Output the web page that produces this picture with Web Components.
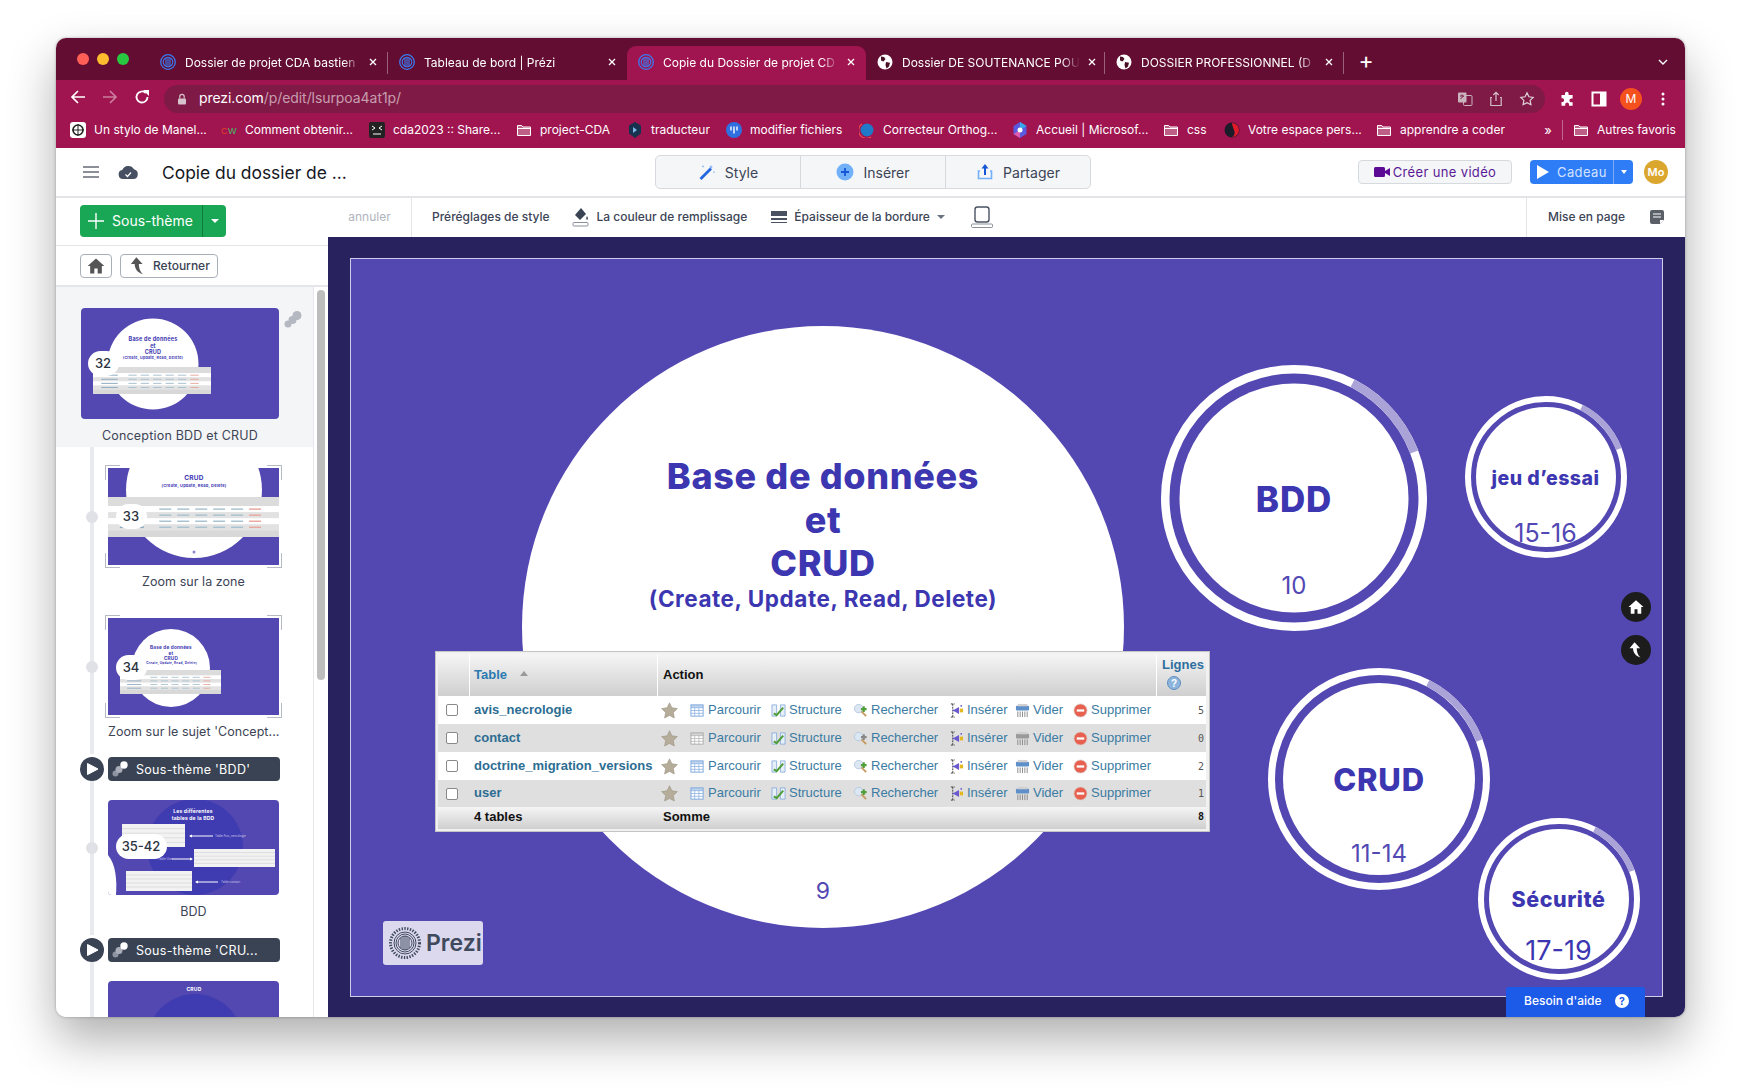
<!DOCTYPE html>
<html lang="fr">
<head>
<meta charset="utf-8">
<title>Prezi</title>
<style>
  html, body { margin: 0; background: #fff; font-family: Inter, "Liberation Sans", sans-serif; }
  body { width: 1741px; height: 1092px; overflow: hidden; }
</style>
</head>
<body>
<browser-window>
  <browser-chrome></browser-chrome>
  <prezi-topbar></prezi-topbar>
  <prezi-editor>
    <prezi-sidebar slot="side"></prezi-sidebar>
    <prezi-toolbar slot="tools"></prezi-toolbar>
    <slide-canvas slot="canvas"></slide-canvas>
  </prezi-editor>
</browser-window>

<script>
// small svg icons shared between the elements
const icons = {
    home: '<path d="M12 3 2 12h3v9h5v-6h4v6h5v-9h3z"/>',
    back: '<path d="M10 1.500 3.500 9.500H8c.2 5.500 3 10 10 12.500-3.500-3-5-7.500-5-12.500h4.500z"/>',
    prezi: '<circle cx="8" cy="8" r="7.300" fill="none" stroke="#3a7bf0" stroke-width="1.300"/><circle cx="8" cy="8" r="4.800" fill="none" stroke="#3a7bf0" stroke-width="1.100"/><path d="M6 4v8M8 3.500v9M10 4v8" stroke="#3a7bf0" stroke-width="1.100"/>',
    globe: '<circle cx="8" cy="8" r="7.500" fill="#fff"/><path d="M4 2.500 7 3 8.500 5 6.500 7.500 4 6.500zM9 8l4 .8-1 3.700-2.500 2L8.500 11z" fill="#4a1027"/>',
    folder: '<path d="M1.500 3.500h4.200l1.300 1.500h7.500v8.500h-13z" fill="rgba(255,255,255,.32)" stroke="#fff" stroke-width="1"/><path d="M1.500 6.500h13" stroke="#fff"/>'
};

function svg(size, body, view = '0 0 16 16') {
    return `<svg width="${size}" height="${size}" viewBox="${view}" style="display:block;flex:none">${body}</svg>`;
}

class BrowserWindow extends HTMLElement {
    constructor() {
        super();
        this.attachShadow({mode: 'open'});
        this.shadowRoot.innerHTML = `
        <style>
          :host {
             display: flex;
             flex-direction: column;
             width: 1629px;
             height: 979px;
             margin: 38px 0 0 56px;
             border-radius: 10px;
             overflow: hidden;
             background: #fff;
             box-shadow: 0 22px 48px rgba(0,0,0,.32), 0 0 3px rgba(0,0,0,.3);
          }
        </style>
        <slot></slot>`;
    }
}

class BrowserTab extends HTMLElement {
    constructor() {
        super();
        this.attachShadow({mode: 'open'});
        const icon = this.getAttribute('icon') === 'globe' ? icons.globe : icons.prezi;
        this.shadowRoot.innerHTML = `
        <style>
          :host {
             display: flex;
             align-items: center;
             box-sizing: border-box;
             width: 239px;
             height: 34px;
             padding: 0 9px 2px 11px;
             font-size: 12px;
             color: #fff;
             position: relative;
          }
          :host([active]) {
             background: #a0144f;
             border-radius: 9px 9px 0 0;
          }
          :host([sep])::after {
             content: '';
             position: absolute;
             right: 0;
             top: 6px;
             height: 22px;
             width: 1px;
             background: rgba(255,255,255,.35);
          }
          .title {
             flex: 1;
             margin-left: 9px;
             white-space: nowrap;
             -webkit-mask-image: linear-gradient(to right, #000 90%, transparent 100%);
          }
          .close { flex: none; width: 12px; margin-left: 6px; }
        </style>
        ${svg(16, icon)}
        <span class="title">${this.getAttribute('label')}</span>
        <span class="close">${svg(12, '<path d="M3 3l6 6M9 3 3 9" stroke="#fff" stroke-width="1.300"/>', '0 0 12 12')}</span>`;
    }
}

class BookMark extends HTMLElement {
    constructor() {
        super();
        this.attachShadow({mode: 'open'});
        this.shadowRoot.innerHTML = `
        <style>
          :host {
             display: flex;
             align-items: center;
             gap: 8px;
             flex: none;
             width: var(--w);
             font-size: 12px;
             color: #fff;
             white-space: nowrap;
          }
        </style>
        <slot name="icon"></slot><slot></slot>`;
    }
}

class BrowserChrome extends HTMLElement {
    constructor() {
        super();
        this.attachShadow({mode: 'open'});
        this.render();
    }

    #mark(width, icon, label) {
        return `<book-mark style="--w:${width}px">${svg(16, icon).replace('<svg', '<svg slot="icon"')}${label}</book-mark>`;
    }

    render() {
        this.shadowRoot.innerHTML = `
        <style>
          :host { display: block; flex: none; }
          .tabs {
             display: flex;
             align-items: flex-end;
             height: 42px;
             background: #640d33;
          }
          .lights { display: flex; gap: 8px; width: 93px; box-sizing: border-box; padding: 0 0 15px 21px; }
          .lights i { width: 12px; height: 12px; border-radius: 50%; }
          .plus { color: #fff; font-size: 23px; font-weight: 400; width: 44px; text-align: center; height: 36px; line-height: 34px; }
          .chev { margin-left: auto; padding: 0 16px 12px 0; }
          .bar {
             display: flex;
             align-items: center;
             height: 33px;
             background: #a0144f;
             padding-top: 0;
          }
          .nav { display: flex; gap: 16px; width: 108px; box-sizing: border-box; padding-left: 14px; }
          .address {
             display: flex;
             align-items: center;
             width: 1381px;
             height: 28px;
             margin-top: 4px;
             border-radius: 14px;
             background: #7e1a45;
             box-sizing: border-box;
             padding: 0 10px 0 12px;
             font-size: 14px;
             color: rgba(255,255,255,.58);
          }
          .address .url { margin: 0 0 2px 11px; letter-spacing: -.07px; }
          .address b { font-weight: 400; color: #fff; }
          .address .end { margin-left: auto; display: flex; gap: 15px; align-items: center; }
          .bar-right { display: flex; gap: 16px; margin: 4px 0 0 14px; align-items: center; }
          .avatar {
             width: 22px; height: 22px; margin: 0 -3px; border-radius: 50%;
             background: #f4511e; color: #fff; font-size: 12px;
             display: flex; align-items: center; justify-content: center;
          }
          .marks {
             display: flex;
             align-items: center;
             height: 35px;
             background: #a0144f;
             padding: 0 0 2px 14px;
             box-sizing: border-box;
          }
          .more { color: #fff; font-size: 13px; width: 22px; text-align: center; margin-left: 6px; }
          .sep { width: 1px; height: 20px; background: rgba(255,255,255,.35); margin: 0 10px 0 3px; flex: none; }
        </style>
        <div class="tabs">
          <div class="lights"><i style="background:#ff5f57"></i><i style="background:#febc2e"></i><i style="background:#28c840"></i></div>
          <browser-tab sep label="Dossier de projet CDA bastien"></browser-tab>
          <browser-tab label="Tableau de bord | Prézi"></browser-tab>
          <browser-tab active label="Copie du Dossier de projet CD"></browser-tab>
          <browser-tab sep icon="globe" label="Dossier DE SOUTENANCE POU"></browser-tab>
          <browser-tab sep icon="globe" label="DOSSIER PROFESSIONNEL (D"></browser-tab>
          <span class="plus">+</span>
          <span class="chev">${svg(12, '<path d="M2 4l4 4 4-4" fill="none" stroke="#fff" stroke-width="1.400"/>', '0 0 12 12')}</span>
        </div>
        <div class="bar">
          <div class="nav">
            ${svg(16, '<path d="M15 8H2M8 2 2 8l6 6" fill="none" stroke="#fff" stroke-width="1.700"/>')}
            ${svg(16, '<path d="M1 8h13M8 2l6 6-6 6" fill="none" stroke="#fff" stroke-opacity=".45" stroke-width="1.700"/>')}
            ${svg(16, '<path d="M13.500 8A5.500 5.500 0 1 1 11.800 4" fill="none" stroke="#fff" stroke-width="1.800"/><path d="M9 1h6v6z" fill="#fff"/>')}
          </div>
          <div class="address">
            ${svg(12, '<rect x="2" y="5.500" width="8" height="6" rx="1" fill="#d6c3cc"/><path d="M3.800 5.500V3.500a2.200 2.200 0 0 1 4.400 0v2" fill="none" stroke="#d6c3cc" stroke-width="1.200"/>', '0 0 12 12')}
            <span class="url"><b>prezi.com</b>/p/edit/lsurpoa4at1p/</span>
            <span class="end">
              ${svg(16, '<rect x="1" y="1.500" width="8.500" height="10" rx="1" fill="#c9b4be"/><rect x="6.500" y="4.500" width="8.500" height="10" rx="1" fill="none" stroke="#c9b4be"/><path d="M3 5h4M5 3.500V5M3.500 8 6.500 5" stroke="#7e1a45"/>')}
              ${svg(16, '<path d="M4 6.500H2.800v8h10.400v-8H12" fill="none" stroke="#d3c0ca" stroke-width="1.200"/><path d="M8 10V1.500M5.300 4 8 1.300 10.700 4" fill="none" stroke="#d3c0ca" stroke-width="1.200"/>')}
              ${svg(16, '<path d="m8 1.800 1.900 4 4.300.6-3.100 3 .8 4.300L8 11.600l-3.900 2.100.8-4.300-3.100-3 4.300-.6z" fill="none" stroke="#e0d2d9" stroke-width="1.200"/>')}
            </span>
          </div>
          <div class="bar-right">
            ${svg(16, '<path d="M6 2.500a1.800 1.800 0 0 1 3.600 0V4h4v3.500h-1.300a1.900 1.900 0 0 0 0 3.800h1.300v3.500H10v-1.300a1.900 1.900 0 0 0-3.800 0v1.300H2.500v-3.800h1.200a1.900 1.900 0 0 0 0-3.700H2.500V4H6z" fill="#fff"/>')}
            ${svg(16, '<rect x="1.500" y="1.500" width="13" height="13" fill="none" stroke="#fff" stroke-width="2"/><rect x="9" y="1.500" width="5.500" height="13" fill="#fff"/>')}
            <span class="avatar">M</span>
            ${svg(16, '<circle cx="8" cy="3" r="1.500" fill="#fff"/><circle cx="8" cy="8" r="1.500" fill="#fff"/><circle cx="8" cy="13" r="1.500" fill="#fff"/>')}
          </div>
        </div>
        <div class="marks">
          ${this.#mark(151, '<rect x="0" y="0" width="16" height="16" rx="3" fill="#fff"/><circle cx="8" cy="8" r="5" fill="none" stroke="#222" stroke-width="1.600"/><path d="M8 2v12M2 8h12" stroke="#222"/>', 'Un stylo de Manel...')}
          ${this.#mark(148, '<text x="0" y="12" font-size="9" font-family="Liberation Sans" fill="#e8402a">C</text><text x="7" y="12" font-size="9" font-family="Liberation Sans" fill="#3fbf6a">W</text>', 'Comment obtenir...')}
          ${this.#mark(147, '<rect width="16" height="16" rx="2" fill="#222"/><path d="M3 4l3 2-3 2M13 4l-3 2 3 2M4 12h8" fill="none" stroke="#fff"/>', 'cda2023 :: Share...')}
          ${this.#mark(111, icons.folder, 'project-CDA')}
          ${this.#mark(99, '<path d="M8 0l6 3.500v8L8 16l-6-4.500v-8z" fill="#16324f"/><path d="M6 5l4 3-4 3z" fill="#7fb6e6"/>', 'traducteur')}
          ${this.#mark(133, '<circle cx="8" cy="8" r="8" fill="#2f6fe0"/><path d="M5 4.500v4M8 4.500v7M11 4.500v4" stroke="#fff" stroke-width="1.400"/>', 'modifier fichiers')}
          ${this.#mark(153, '<circle cx="8" cy="8" r="6.500" fill="#1f78c8"/><path d="M3 2a7.500 7.500 0 0 0 9 13" fill="none" stroke="#e84a4a" stroke-width="1.300"/>', 'Correcteur Orthog...')}
          ${this.#mark(151, '<path d="M8 0l6.500 4v8L8 16l-6.500-4V4z" fill="#5a5ae0"/><path d="M8 0l6.500 4L8 8z" fill="#38a8e8"/><path d="M1.500 12 8 8l0 8z" fill="#e05ab0"/><circle cx="8" cy="8" r="2.500" fill="#fff"/>', 'Accueil | Microsof...')}
          ${this.#mark(61, icons.folder, 'css')}
          ${this.#mark(152, '<circle cx="8" cy="8" r="7.500" fill="#1b1b2a"/><path d="M8 1a7 7 0 0 1 0 14c3-2 3-4 2-7S8 3 8 1z" fill="#e01a2a"/>', 'Votre espace pers...')}
          ${this.#mark(155, icons.folder, 'apprendre a coder')}
          <span class="more">»</span>
          <span class="sep"></span>
          ${this.#mark(95, icons.folder, 'Autres favoris')}
        </div>`;
    }
}

class PreziTopbar extends HTMLElement {
    constructor() {
        super();
        this.attachShadow({mode: 'open'});
        this.shadowRoot.innerHTML = `
        <style>
          :host {
             display: flex;
             align-items: center;
             flex: none;
             height: 50px;
             box-sizing: border-box;
             background: #fff;
             border-bottom: 2px solid #e2e4e8;
          }
          .left { display: flex; align-items: center; width: 599px; box-sizing: border-box; padding-left: 27px; }
          .title { font-size: 17.400px; font-weight: 400; color: #15181e; margin-left: 23px; white-space: nowrap; }
          .group {
             display: flex;
             width: 436px;
             height: 34px;
             box-sizing: border-box;
             border: 1px solid #d6d9de;
             border-radius: 5px;
             background: #f5f6f8;
          }
          .group div {
             flex: 1;
             display: flex;
             align-items: center;
             justify-content: center;
             gap: 9px;
             font-size: 14px;
             color: #3c4456;
          }
          .group div + div { border-left: 1px solid #d6d9de; }
          .right { margin-left: auto; display: flex; align-items: center; padding-right: 17px; }
          .video {
             display: flex;
             align-items: center;
             gap: 3px;
             width: 154px;
             height: 24px;
             box-sizing: border-box;
             justify-content: center;
             border: 1px solid #d6d9de;
             border-radius: 4px;
             background: #f5f6f8;
             color: #5a1a96;
             font-size: 13px;
             letter-spacing: .35px;
             margin-right: 18px;
          }
          .gift {
             display: flex;
             align-items: center;
             width: 103px;
             height: 24px;
             border-radius: 4px;
             background: #2e7cf6;
             color: #d4e3fd;
             font-size: 13px;
             letter-spacing: .4px;
             margin-right: 11px;
          }
          .gift .play { margin: 0 7px 0 6px; }
          .gift .drop { margin-left: auto; width: 19px; height: 24px; border-left: 1px solid #7aaaf8; display: flex; align-items: center; justify-content: center; }
          .mo {
             width: 24px; height: 24px; border-radius: 50%; background: #dba62e; color: #fff;
             font-size: 11px; font-weight: 600; display: flex; align-items: center; justify-content: center;
          }
        </style>
        <div class="left">
          ${svg(16, '<path d="M0 3h16M0 8h16M0 13h16" stroke="#666b75" stroke-width="1.500"/>')}
          <span style="width:18px"></span>
          ${svg(22, '<path d="M6 18a4.500 4.500 0 0 1-.8-8.900A6.500 6.500 0 0 1 17 8.300 5 5 0 0 1 17 18z" fill="#465062"/><path d="M8.500 13.500l2 2 3.500-4" fill="none" stroke="#fff" stroke-width="1.200"/>', '0 0 22 22')}
          <span class="title">Copie du dossier de ...</span>
        </div>
        <div class="group">
          <div>${svg(18, '<path d="M2.500 16 13 5.500" stroke="#2468e0" stroke-width="2.800"/><path d="M13 2l.6 1.400L15 4l-1.400.6L13 6l-.6-1.400L11 4l1.400-.6zM5 2l.4 1 1 .4-1 .4-.4 1-.4-1-1-.4 1-.4zM16 8l.3.8.8.3-.8.3-.3.8-.3-.8-.8-.3.8-.3z" fill="#6ea6f5"/>', '0 0 18 18')}<span>Style</span></div>
          <div>${svg(18, '<circle cx="9" cy="9" r="8.500" fill="#72b1f8"/><path d="M9 5v8M5 9h8" stroke="#1556d8" stroke-width="1.800"/>', '0 0 18 18')}<span>Insérer</span></div>
          <div>${svg(18, '<path d="M4 8H2.500v7.500h13V8H14" fill="none" stroke="#72b1f8" stroke-width="1.600"/><path d="M9 12V4" stroke="#1556d8" stroke-width="2"/><path d="M5.500 5.500 9 1l3.500 4.500z" fill="#1556d8"/>', '0 0 18 18')}<span>Partager</span></div>
        </div>
        <div class="right">
          <div class="video">${svg(16, '<rect x="0" y="3" width="11" height="10" rx="1.500" fill="#5a0a94"/><path d="M11 7l5-3v8l-5-3z" fill="#5a0a94"/>')}<span>Créer une vidéo</span></div>
          <div class="gift">
            <span class="play">${svg(14, '<path d="M1 0l12 7-12 7z" fill="#fff"/>', '0 0 14 14')}</span><span>Cadeau</span>
            <span class="drop">${svg(8, '<path d="M1 2h6L4 6z" fill="#fff"/>', '0 0 8 8')}</span>
          </div>
          <div class="mo">Mo</div>
        </div>`;
    }
}

class PreziEditor extends HTMLElement {
    constructor() {
        super();
        this.attachShadow({mode: 'open'});
        this.shadowRoot.innerHTML = `
        <style>
          :host {
             display: grid;
             flex: 1;
             min-height: 0;
             grid-template-columns: 272px 1fr;
             grid-template-rows: 39px 1fr;
          }
          ::slotted([slot=side]) { grid-row: 1 / 3; }
        </style>
        <slot name="side"></slot><slot name="tools"></slot><slot name="canvas"></slot>`;
    }
}

class PreziToolbar extends HTMLElement {
    constructor() {
        super();
        this.attachShadow({mode: 'open'});
        this.shadowRoot.innerHTML = `
        <style>
          :host {
             display: flex;
             align-items: center;
             background: #fff;
             font-size: 12px;
             font-weight: 500;
             color: #3c4456;
             white-space: nowrap;
          }
          .undo {
             width: 84px; height: 100%; box-sizing: border-box; flex: none;
             border-right: 1px solid #e2e4e8; color: #b0b4bd; font-weight: 400;
             display: flex; align-items: center; justify-content: center; padding-bottom: 2px;
          }
          .item { display: flex; align-items: center; padding-bottom: 2px; }
          .end {
             margin-left: auto; height: 100%; box-sizing: border-box;
             border-left: 1px solid #e2e4e8; padding: 0 21px 2px;
             display: flex; align-items: center; gap: 25px;
          }
        </style>
        <div class="undo">annuler</div>
        <div class="item" style="margin-left:20px">Préréglages de style</div>
        <div class="item" style="margin-left:21px;gap:6px">
          ${svg(20, '<path d="M10 1 4 8l5 5 6-6z" fill="#3a4354"/><path d="M16 9c1 2 1.500 3 0 4-1-1-1-2 0-4z" fill="#3a4354"/><rect x="2" y="15.500" width="15" height="3.500" rx="1" fill="none" stroke="#8a909b"/>', '0 0 20 20')}
          <span>La couleur de remplissage</span>
        </div>
        <div class="item" style="margin-left:24px;gap:7px">
          ${svg(16, '<rect y="2" width="16" height="5" fill="#4a5262"/><rect y="9" width="16" height="2" fill="#4a5262"/><rect y="13" width="16" height="1" fill="#4a5262"/>')}
          <span>Épaisseur de la bordure</span>
          ${svg(8, '<path d="M0 2h8L4 6z" fill="#6b7280"/>', '0 0 8 8')}
        </div>
        <div class="item" style="margin-left:25px">
          ${svg(24, '<rect x="5" y="2" width="14" height="15" rx="2.500" fill="none" stroke="#4a5262" stroke-width="1.400"/><rect x="1.500" y="19" width="21" height="3.500" rx="1" fill="none" stroke="#8a909b"/>', '0 0 24 24')}
        </div>
        <div class="end">
          <span>Mise en page</span>
          ${svg(14, '<path d="M2 0h10a2 2 0 0 1 2 2v8l-4 4H2a2 2 0 0 1-2-2V2a2 2 0 0 1 2-2z" fill="#5b6068"/><path d="M3 4h8M3 7h8" stroke="#fff" stroke-width="1.200"/><path d="M10 14v-4h4" fill="#fff"/>', '0 0 14 14')}
        </div>`;
    }
}

// mini phpMyAdmin table drawn in the slide thumbnails
function miniTable(x, y, w, h) {
    const rowH = h / 6.6;
    let out = `<rect x="${x}" y="${y}" width="${w}" height="${h}" fill="#efefef"/><rect x="${x}" y="${y}" width="${w}" height="${rowH * 1.5}" fill="#dcdcdc"/>`;
    for (let i = 0; i < 4; i++) {
        const ry = y + rowH * (1.5 + i);
        out += `<rect x="${x}" y="${ry}" width="${w}" height="${rowH}" fill="${i % 2 ? '#e2e2e2' : '#fff'}"/>`;
        out += `<rect x="${x + w * .07}" y="${ry + rowH * .38}" width="${w * .14}" height="${rowH * .24}" fill="#8fabc0"/>`;
        for (let j = 0; j < 6; j++) {
            out += `<rect x="${x + w * (.3 + j * .105)}" y="${ry + rowH * .38}" width="${w * .07}" height="${rowH * .24}" fill="${j === 5 ? '#e8a89f' : '#a9c2d0'}"/>`;
        }
    }
    out += `<rect x="${x}" y="${y + rowH * 5.5}" width="${w}" height="${rowH * 1.1}" fill="#d8d8d8"/>`;
    return out;
}

function miniText(x, y, size, label, fill = '#3c36b1') {
    return `<text x="${x}" y="${y}" text-anchor="middle" font-size="${size}" font-weight="700" font-family="Inter, sans-serif" letter-spacing=".2" fill="${fill}">${label}</text>`;
}

function miniDeck(cx, top, scale) {
    return miniText(cx, top, 5.500 * scale, 'Base de données')
        + miniText(cx, top + 6.500 * scale, 5.500 * scale, 'et')
        + miniText(cx, top + 13 * scale, 5.500 * scale, 'CRUD')
        + miniText(cx, top + 18 * scale, 3.700 * scale, '(Create, Update, Read, Delete)');
}

function miniSheet(x, y, w, h) {
    let out = `<rect x="${x}" y="${y}" width="${w}" height="${h}" fill="#f2f2f2"/>`;
    for (let i = 1; i < 5; i++) {
        out += `<path d="M${x} ${y + i * h / 5}h${w}" stroke="#c8c8c8" stroke-width=".5"/>`;
    }
    return out;
}

function miniNote(x, y, label) {
    return `<text x="${x}" y="${y}" font-size="3" font-family="Inter, sans-serif" fill="#c9c5ea">${label}</text>`;
}

const thumbs = {
    deck: () => `<circle cx="72" cy="56" r="45.500" fill="#fff"/>${miniDeck(72, 33, 1)}${miniTable(12, 59, 118, 27)}`,
    zoom: () => `<circle cx="86" cy="22" r="68" fill="#fff"/>${miniText(86, 12, 6.500, 'CRUD')}${miniText(86, 19, 4, '(Create, Update, Read, Delete)')}${miniTable(0, 29, 171, 40)}<circle cx="86" cy="84" r="1.500" fill="#8f88d0"/>`,
    topic: () => `<circle cx="63" cy="50" r="39" fill="#fff"/>${miniDeck(63, 31, .85)}${miniTable(12, 52, 101, 24)}`,
    tables: () => `<circle cx="87" cy="47" r="48" fill="#3f3bb0"/><path d="M0 55C8 65 9 80 8 95H0z" fill="#fff"/>${miniText(85, 13, 5, 'Les différentes', '#fff')}${miniText(85, 20, 5, 'tables de la BDD', '#fff')}${miniSheet(14, 24, 63, 23)}${miniSheet(86, 49, 81, 18)}${miniSheet(18, 71, 66, 20)}<path d="M82 36h23M64 59h20M88 82h22" stroke="#fff" stroke-width="1"/><path d="M81 36l3-1.500v3zM85 59l-3-1.500v3zM87 82l3-1.500v3z" fill="#fff"/>${miniNote(107, 37, 'Table Avis_necrologie')}${miniNote(50, 60, 'Table User')}${miniNote(113, 83, 'Table contact')}`,
    crud: () => `<circle cx="87" cy="61" r="48" fill="#3f3bb0"/>${miniText(86, 10, 5, 'CRUD', '#fff')}`
};

class SlideThumb extends HTMLElement {
    constructor() {
        super();
        this.attachShadow({mode: 'open'});
        const w = this.getAttribute('w');
        const h = this.getAttribute('h');
        const num = this.getAttribute('num');
        const pill = this.getAttribute('pill') || 31;
        this.shadowRoot.innerHTML = `
        <style>
          :host {
             display: block;
             position: relative;
             width: ${w}px;
             height: ${h}px;
             background: #5348b1;
             box-sizing: content-box;
             overflow: hidden;
             border-radius: ${this.hasAttribute('square') ? 0 : 4}px;
          }
          svg { display: block; }
          .badge {
             position: absolute;
             left: ${this.getAttribute('bx') - pill / 2}px;
             top: ${this.getAttribute('by') - 12.500}px;
             width: ${pill}px;
             height: 25px;
             border-radius: 13px;
             background: #fff;
             font-size: 13px;
             font-weight: 500;
             color: #2b3240;
             display: flex;
             align-items: center;
             justify-content: center;
          }
        </style>
        <svg width="${w}" height="${h}">${thumbs[this.getAttribute('kind')]()}</svg>
        ${num ? `<div class="badge">${num}</div>` : ''}`;
    }
}

class SideItem extends HTMLElement {
    constructor() {
        super();
        this.attachShadow({mode: 'open'});
        const label = this.getAttribute('label');
        this.shadowRoot.innerHTML = `
        <style>
          :host {
             display: block;
             position: relative;
             padding: var(--pt, 0) 0 var(--pb, 15px) 52px;
          }
          :host::before {
             content: '';
             position: absolute;
             left: 34px;
             top: 0;
             bottom: 0;
             width: 4px;
             background: #e9eaed;
          }
          :host([root]) { padding: 21px 0 0 25px; height: 160px; box-sizing: border-box; background: #f4f5f7; }
          :host([root])::before { display: none; }
          .frame {
             position: relative;
             width: 171px;
             margin: -3px;
             padding: 3px;
             --c: #b5bac4;
             background:
               linear-gradient(var(--c), var(--c)) 0 0 / 15px 1px,
               linear-gradient(var(--c), var(--c)) 0 0 / 1px 15px,
               linear-gradient(var(--c), var(--c)) 100% 0 / 15px 1px,
               linear-gradient(var(--c), var(--c)) 100% 0 / 1px 15px,
               linear-gradient(var(--c), var(--c)) 0 100% / 15px 1px,
               linear-gradient(var(--c), var(--c)) 0 100% / 1px 15px,
               linear-gradient(var(--c), var(--c)) 100% 100% / 15px 1px,
               linear-gradient(var(--c), var(--c)) 100% 100% / 1px 15px;
             background-repeat: no-repeat;
          }
          :host([plain]) .frame { background: none; }
          :host([root]) .frame { width: 198px; background: none; }
          .dot {
             position: absolute;
             left: -19px;
             top: calc(50% - 6px);
             width: 12px;
             height: 12px;
             border-radius: 50%;
             background: #dfe1e6;
          }
          :host([root]) .dot { display: none; }
          .label {
             height: 22px;
             line-height: 22px;
             margin-top: 6px;
             width: 171px;
             text-align: center;
             font-size: 12.500px;
             color: #3c4456;
             letter-spacing: .05px;
             white-space: nowrap;
          }
          :host([root]) .label { width: 198px; margin-top: 6px; letter-spacing: .2px; }
          .group { position: absolute; left: 227px; top: 22px; }
        </style>
        <div class="frame"><span class="dot"></span><slot></slot></div>
        ${label ? `<div class="label">${label}</div>` : ''}
        ${this.hasAttribute('root') ? `<span class="group">${svg(20, '<circle cx="5" cy="15" r="3.500" fill="#b4b8c0"/><circle cx="9.500" cy="11" r="4" fill="#b4b8c0"/><circle cx="14" cy="6.500" r="4.500" fill="#b4b8c0"/>', '0 0 20 20')}</span>` : ''}`;
    }
}

class SideSubtopic extends HTMLElement {
    constructor() {
        super();
        this.attachShadow({mode: 'open'});
        this.shadowRoot.innerHTML = `
        <style>
          :host { display: block; position: relative; padding-left: 52px; height: 24px; }
          :host::before {
             content: '';
             position: absolute;
             left: 34px;
             top: -6px;
             bottom: -6px;
             width: 4px;
             background: #e9eaed;
          }
          .play {
             position: absolute;
             left: 24px;
             top: 0;
             width: 24px;
             height: 24px;
             border-radius: 50%;
             background: #3a4354;
             box-shadow: 0 0 0 3px #fff;
             display: flex;
             align-items: center;
             justify-content: center;
          }
          .bar {
             display: flex;
             align-items: center;
             gap: 8px;
             width: 172px;
             height: 24px;
             box-sizing: border-box;
             padding-left: 4px;
             border-radius: 4px;
             background: #3a4354;
             color: #fff;
             font-size: 12.500px;
             letter-spacing: .3px;
             white-space: nowrap;
          }
        </style>
        <span class="play">${svg(14, '<path d="M2.500 1.500 13 7 2.500 12.500z" fill="#fff" stroke="#fff" stroke-linejoin="round"/>', '0 0 14 14')}</span>
        <div class="bar">
          ${svg(16, '<circle cx="3.500" cy="12.500" r="3" fill="#8d93a0"/><circle cx="7" cy="8.500" r="3.500" fill="#a8adb8"/><circle cx="12" cy="4" r="3.700" fill="#fff"/>')}
          <span><slot></slot></span>
        </div>`;
    }
}

class PreziSidebar extends HTMLElement {
    constructor() {
        super();
        this.attachShadow({mode: 'open'});
        this.shadowRoot.innerHTML = `
        <style>
          :host {
             display: flex;
             flex-direction: column;
             min-height: 0;
             overflow: hidden;
             background: #fff;
          }
          .add-row { height: 48px; box-sizing: border-box; padding: 7px 0 0 24px; border-bottom: 1px solid #e2e4e8; flex: none; }
          .add {
             display: flex;
             align-items: center;
             width: 146px;
             height: 32px;
             border-radius: 4px;
             background: #1aa755;
             color: #fff;
             font-size: 14px;
             font-weight: 400;
             box-sizing: border-box;
             padding-left: 8px;
             gap: 8px;
          }
          .add > span:nth-of-type(1) { padding-bottom: 2px; }
          .add .drop { margin-left: auto; width: 24px; height: 32px; border-left: 1px solid #0f7c3e; display: flex; align-items: center; justify-content: center; box-sizing: border-box; }
          .nav-row { height: 41px; box-sizing: border-box; padding: 8px 0 0 24px; border-bottom: 2px solid #e4e6ea; display: flex; gap: 8px; flex: none; }
          .btn {
             display: flex;
             align-items: center;
             height: 24px;
             box-sizing: border-box;
             border: 1px solid #a9afb9;
             border-radius: 4px;
             color: #3a4354;
             font-size: 12px;
             font-weight: 500;
          }
          .btn span { padding-bottom: 2px; }
          .body { display: flex; flex: 1; min-height: 0; }
          .list { width: 257px; flex: none; overflow: hidden; }
          .track { width: 15px; box-sizing: border-box; border-left: 1px solid #e5e7eb; padding: 3px 3px 0 3px; flex: none; }
          .track i { display: block; width: 8px; height: 390px; border-radius: 4px; background: #bdbdbd; }
        </style>
        <div class="add-row">
          <div class="add">
            ${svg(16, '<path d="M8 0v16M0 8h16" stroke="#fff" stroke-width="1.400"/>')}
            <span>Sous-thème</span>
            <span class="drop">${svg(8, '<path d="M0 2h8L4 6z" fill="#fff"/>', '0 0 8 8')}</span>
          </div>
        </div>
        <div class="nav-row">
          <div class="btn" style="width:32px;justify-content:center">${svg(20, `<g fill="#555">${icons.home}</g>`, '0 0 24 24')}</div>
          <div class="btn" style="width:98px;padding-left:7px;gap:5px">${svg(20, `<g fill="#555">${icons.back}</g>`, '0 0 24 24')}<span>Retourner</span></div>
        </div>
        <div class="body">
          <div class="list">
            <side-item root plain label="Conception BDD et CRUD">
              <slide-thumb kind="deck" w="198" h="111" num="32" bx="22" by="55"></slide-thumb>
            </side-item>
            <side-item label="Zoom sur la zone" style="--pt:21px;--pb:25px">
              <slide-thumb square kind="zoom" w="171" h="97" num="33" bx="23" by="48"></slide-thumb>
            </side-item>
            <side-item label="Zoom sur le sujet 'Concept..." style="--pb:14px">
              <slide-thumb square kind="topic" w="171" h="97" num="34" bx="23" by="49"></slide-thumb>
            </side-item>
            <side-subtopic>Sous-thème 'BDD'</side-subtopic>
            <side-item plain label="BDD" style="--pt:19px;--pb:15px">
              <slide-thumb kind="tables" w="171" h="95" num="35-42" pill="51" bx="33" by="46"></slide-thumb>
            </side-item>
            <side-subtopic>Sous-thème 'CRU...</side-subtopic>
            <side-item plain style="--pt:19px">
              <slide-thumb kind="crud" w="171" h="95"></slide-thumb>
            </side-item>
          </div>
          <div class="track"><i></i></div>
        </div>`;
    }
}

class TopicRing extends HTMLElement {
    constructor() {
        super();
        this.attachShadow({mode: 'open'});
        const get = (name) => Number(this.getAttribute(name));
        const r = get('r');
        const band = get('band');
        const inner = get('inner');
        const mid = r - band / 2;
        // light arc, between 27 and 69 degrees from the top
        const point = (deg) => {
            const a = deg * Math.PI / 180;
            return `${(r + mid * Math.sin(a)).toFixed(1)} ${(r - mid * Math.cos(a)).toFixed(1)}`;
        };
        this.shadowRoot.innerHTML = `
        <style>
          :host {
             position: absolute;
             left: ${get('cx') - r}px;
             top: ${get('cy') - r}px;
             width: ${r * 2}px;
             height: ${r * 2}px;
             color: #3c36b1;
             text-align: center;
             white-space: nowrap;
          }
          svg { position: absolute; left: 0; top: 0; }
          .name, .num { position: absolute; left: 0; right: 0; transform: translateY(-50%); }
          .name { top: ${get('ny')}px; font-size: ${get('ns')}px; font-weight: 800; letter-spacing: .025em; }
          .num { top: ${get('py')}px; font-size: ${get('ps')}px; font-weight: 400; color: ${this.getAttribute('pc') || '#5248b4'}; }
        </style>
        <svg width="${r * 2}" height="${r * 2}">
          <circle cx="${r}" cy="${r}" r="${mid}" fill="none" stroke="#fff" stroke-width="${band}"/>
          <path d="M${point(27)} A${mid} ${mid} 0 0 1 ${point(69)}" fill="none" stroke="#aaa3d8" stroke-width="${band}"/>
          <circle cx="${r}" cy="${r}" r="${inner}" fill="#fff"/>
        </svg>
        <div class="name">${this.getAttribute('name')}</div>
        <div class="num">${this.getAttribute('pages')}</div>`;
    }
}

class MainTopic extends HTMLElement {
    constructor() {
        super();
        this.attachShadow({mode: 'open'});
        this.shadowRoot.innerHTML = `
        <style>
          :host {
             position: absolute;
             left: 171px;
             top: 67px;
             width: 602px;
             height: 602px;
             box-sizing: border-box;
             padding-top: 129px;
             border-radius: 50%;
             background: #fff;
             color: #3c36b1;
             text-align: center;
          }
          h1 { margin: 0; font-size: 36px; line-height: 43.500px; font-weight: 800; letter-spacing: .65px; }
          h2 { margin: 1px 0 0; font-size: 22.500px; line-height: 24px; font-weight: 700; letter-spacing: .55px; }
          p { margin: 266px 0 0; font-size: 23px; line-height: 28px; color: #5248b4; }
        </style>
        <h1>Base de données<br>et<br>CRUD</h1>
        <h2>(Create, Update, Read, Delete)</h2>
        <p>9</p>`;
    }
}

const tableIcons = {
    star: '<path d="m8.500 .8 2.400 5 5.500.8-4 3.900.9 5.500-4.800-2.600-4.900 2.600 1-5.500-4-3.900 5.500-.8z" fill="#b5ad99" stroke="#9c9484" stroke-width=".6"/>',
    browse: (c) => `<rect x="1" y="2" width="13" height="12" fill="#fff" stroke="${c}"/><path d="M1 5h13M1 8h13M1 11h13M5 5v9M9.500 5v9" stroke="${c}" stroke-width=".7"/><rect x="1" y="2" width="13" height="3" fill="${c}" opacity=".5"/>`,
    structure: '<path d="M1 2h5v12H1zM10 2h5v12h-5z" fill="#e6eef8" stroke="#7ba3d8" stroke-width=".8"/><path d="M3 11l3 2 7-8" fill="none" stroke="#4f9e3a" stroke-width="2.200"/>',
    search: (c, p) => `<circle cx="6" cy="6" r="4.500" fill="#dbe7f3" stroke="#b8cade"/><path d="m9 9 5 5" stroke="#c69a5e" stroke-width="2"/><path d="M8.500 6.500h6M11.500 3.500v6" stroke="${p}" stroke-width="2.200"/>`,
    insert: '<path d="M2 1h4M2 15h4M4 1v14" stroke="#333" stroke-width="1" stroke-dasharray="2 1"/><path d="M4 8h6M10 5.500 5.500 8 10 10.500z" stroke="#6a5ad0" fill="#6a5ad0" stroke-width="1.400"/><rect x="11.500" y="6" width="3.500" height="4" fill="#e6b820"/><circle cx="13" cy="3" r="1" fill="#6a5ad0"/>',
    empty: (c) => `<rect x="1" y="3" width="14" height="5" rx="1" fill="${c}"/><rect x="3" y="1" width="10" height="2.500" fill="#d0d0d0"/><path d="M3 9v6M5.500 9v6M8 9v6M10.500 9v6M13 9v6" stroke="#888" stroke-width="1"/>`,
    drop: '<circle cx="8" cy="8" r="7" fill="#e8604f" stroke="#d8d0c8" stroke-width=".8"/><rect x="4" y="6.800" width="8" height="2.400" fill="#fff"/>'
};

class TableRow extends HTMLElement {
    constructor() {
        super();
        this.attachShadow({mode: 'open'});
        const dim = this.hasAttribute('empty');
        const action = (width, icon, label) => `<span class="act" style="width:${width}px">${svg(15, icon)}<span>${label}</span></span>`;
        this.shadowRoot.innerHTML = `
        <style>
          :host {
             display: grid;
             grid-template-columns: 32px 188px 499px 51px;
             height: var(--row, 28px);
             align-items: center;
             font: 13px "Liberation Sans", sans-serif;
             color: #3b7ba3;
          }
          :host([odd]) { background: #fff; }
          :host([even]) { background: #dfdfdf; }
          .check { width: 12px; height: 12px; box-sizing: border-box; margin-left: 8px; background: #fff; border: 1px solid #8a8a8a; border-radius: 2px; }
          .name { padding-left: 4px; font-weight: 700; color: #2c6d92; white-space: nowrap; font-size: 13px; }
          .text { position: relative; top: -1px; }
          .actions { display: flex; align-items: center; padding-left: 3px; white-space: nowrap; font-size: 13px; }
          .star { width: 29px; flex: none; }
          .act { display: flex; align-items: center; gap: 3px; flex: none; }
          .act span { position: relative; top: -1px; }
          .count { text-align: right; padding-right: 4px; font: 10px "DejaVu Sans Mono", monospace; color: #555; }
        </style>
        <span class="check"></span>
        <span class="name"><span class="text">${this.getAttribute('name')}</span></span>
        <span class="actions">
          <span class="star">${svg(17, tableIcons.star, '0 0 17 17')}</span>
          ${action(81, tableIcons.browse(dim ? '#aaa' : '#7ba7dc'), 'Parcourir')}
          ${action(82, tableIcons.structure, 'Structure')}
          ${action(96, tableIcons.search(dim ? '#888' : '#4f9e3a', dim ? '#888' : '#4f9e3a'), 'Rechercher')}
          ${action(66, tableIcons.insert, 'Insérer')}
          ${action(58, tableIcons.empty(dim ? '#9a9a9a' : '#5f8fc8'), 'Vider')}
          ${action(78, tableIcons.drop, 'Supprimer')}
        </span>
        <span class="count">${this.getAttribute('count')}</span>`;
    }
}

class PhpTable extends HTMLElement {
    constructor() {
        super();
        this.attachShadow({mode: 'open'});
        this.shadowRoot.innerHTML = `
        <style>
          :host {
             position: absolute;
             left: 84px;
             top: 392px;
             width: 775px;
             height: 181px;
             box-sizing: border-box;
             padding: 2px 3px 4px 2px;
             background: #f1f1f1;
             border: 1px solid #c4c4c4;
             font: 13px "Liberation Sans", sans-serif;
          }
          .head, .foot {
             display: grid;
             grid-template-columns: 32px 188px 499px 51px;
             background: linear-gradient(#f5f5f5, #cfcfcf);
             font-weight: 700;
             color: #111;
          }
          .head { height: 42px; }
          .head > div { border-right: 1px solid #fff; display: flex; align-items: center; box-sizing: border-box; }
          .head .sort { color: #2c7ab0; padding: 0 0 2px 4px; gap: 13px; }
          .head .act { padding: 0 0 2px 5px; }
          .head .lines { flex-direction: column; align-items: flex-start; border-right: 0; color: #2f6f9f; padding: 3px 0 0 5px; gap: 4px; }
          .head .lines svg { margin-left: 5px; }
          .foot { height: 22px; align-items: center; }
          .foot span { position: relative; top: -2px; }
          .foot span:nth-child(2) { padding-left: 4px; }
          .foot span:nth-child(3) { padding-left: 5px; }
          .foot span:last-child { text-align: right; padding-right: 4px; font: 700 10px "DejaVu Sans Mono", monospace; }
        </style>
        <div class="head">
          <div></div>
          <div class="sort"><span>Table</span>${svg(8, '<path d="M0 6h8L4 1z" fill="#999"/>', '0 0 8 8')}</div>
          <div class="act">Action</div>
          <div class="lines"><span>Lignes</span>${svg(14, '<circle cx="7" cy="7" r="6.500" fill="#8db4dc" stroke="#5f8fc0"/><text x="7" y="10.500" text-anchor="middle" font-size="10" font-weight="700" fill="#fff" font-family="Liberation Sans">?</text>', '0 0 14 14')}</div>
        </div>
        <table-row odd name="avis_necrologie" count="5"></table-row>
        <table-row even empty name="contact" count="0"></table-row>
        <table-row odd name="doctrine_migration_versions" count="2"></table-row>
        <table-row even name="user" count="1" style="--row:27px"></table-row>
        <div class="foot"><span></span><span>4 tables</span><span>Somme</span><span>8</span></div>`;
    }
}

class SlideCanvas extends HTMLElement {
    constructor() {
        super();
        this.attachShadow({mode: 'open'});
        this.shadowRoot.innerHTML = `
        <style>
          :host {
             display: block;
             position: relative;
             box-sizing: border-box;
             padding: 22px 23px;
             background: #28225e;
             min-height: 0;
             overflow: hidden;
          }
          .slide {
             position: relative;
             width: 1311px;
             height: 737px;
             background: #5347b2;
             box-shadow: 0 0 0 1px #cfcce8;
          }
          .logo {
             position: absolute;
             left: 32px;
             top: 662px;
             width: 100px;
             height: 44px;
             box-sizing: border-box;
             padding-left: 6px;
             display: flex;
             align-items: center;
             gap: 5px;
             border-radius: 3px;
             background: #dcd9ef;
             color: #3f4a5c;
             font-size: 23px;
             font-weight: 600;
          }
          .round {
             position: absolute;
             left: 1270px;
             width: 30px;
             height: 30px;
             border-radius: 50%;
             background: #1c1c1c;
             display: flex;
             align-items: center;
             justify-content: center;
          }
          .help {
             position: absolute;
             left: 1178px;
             bottom: 0;
             width: 139px;
             height: 30px;
             box-sizing: border-box;
             padding: 0 0 3px 18px;
             gap: 13px;
             display: flex;
             align-items: center;
             border-radius: 3px 3px 0 0;
             background: #1c5be8;
             color: #fff;
             font-size: 12px;
             font-weight: 500;
          }
        </style>
        <div class="slide">
          <main-topic></main-topic>
          <php-table></php-table>
          <topic-ring cx="943" cy="239" r="133" band="8.500" inner="114.500" name="BDD" ns="35" ny="134" pages="10" ps="24" py="220"></topic-ring>
          <topic-ring cx="1194.500" cy="218" r="81" band="6" inner="70" name="jeu d’essai" ns="19.500" ny="82" pages="15-16" ps="25" py="137"></topic-ring>
          <topic-ring cx="1028" cy="520" r="111" band="7" inner="96" name="CRUD" ns="31" ny="111" pages="11-14" ps="24" py="185"></topic-ring>
          <topic-ring cx="1207.500" cy="640" r="81" band="6" inner="70" name="Sécurité" ns="21.500" ny="81" pages="17-19" ps="27" py="132" pc="#3c36b1"></topic-ring>
          <div class="logo">
            ${svg(32, '<circle cx="16" cy="16" r="14.500" fill="none" stroke="#3f4a5c" stroke-width="3" stroke-dasharray="1.400 1.400"/><circle cx="16" cy="16" r="11" fill="none" stroke="#3f4a5c" stroke-width="1"/><circle cx="16" cy="16" r="9" fill="none" stroke="#3f4a5c" stroke-width="1"/><circle cx="16" cy="16" r="7" fill="none" stroke="#3f4a5c" stroke-width="1"/><path d="M12 11v10M14 9.500v13M16 9v14M18 9.500v13M20 11v10" stroke="#3f4a5c" stroke-width="1"/>', '0 0 32 32')}
            <span>Prezi</span>
          </div>
          <div class="round" style="top:333px">${svg(18, `<g fill="#fff">${icons.home}</g>`, '0 0 24 24')}</div>
          <div class="round" style="top:376px">${svg(18, `<g fill="#fff">${icons.back}</g>`, '0 0 24 24')}</div>
        </div>
        <div class="help">
          <span>Besoin d'aide</span>
          ${svg(14, '<circle cx="7" cy="7" r="7" fill="#fff"/><text x="7" y="10.800" text-anchor="middle" font-size="10.500" font-weight="700" fill="#1c5be8" font-family="Inter">?</text>', '0 0 14 14')}
        </div>`;
    }
}

window.customElements.define('browser-window', BrowserWindow);
window.customElements.define('browser-tab', BrowserTab);
window.customElements.define('book-mark', BookMark);
window.customElements.define('browser-chrome', BrowserChrome);
window.customElements.define('prezi-topbar', PreziTopbar);
window.customElements.define('prezi-editor', PreziEditor);
window.customElements.define('prezi-toolbar', PreziToolbar);
window.customElements.define('slide-thumb', SlideThumb);
window.customElements.define('side-item', SideItem);
window.customElements.define('side-subtopic', SideSubtopic);
window.customElements.define('prezi-sidebar', PreziSidebar);
window.customElements.define('topic-ring', TopicRing);
window.customElements.define('main-topic', MainTopic);
window.customElements.define('table-row', TableRow);
window.customElements.define('php-table', PhpTable);
window.customElements.define('slide-canvas', SlideCanvas);
</script>
</body>
</html>
